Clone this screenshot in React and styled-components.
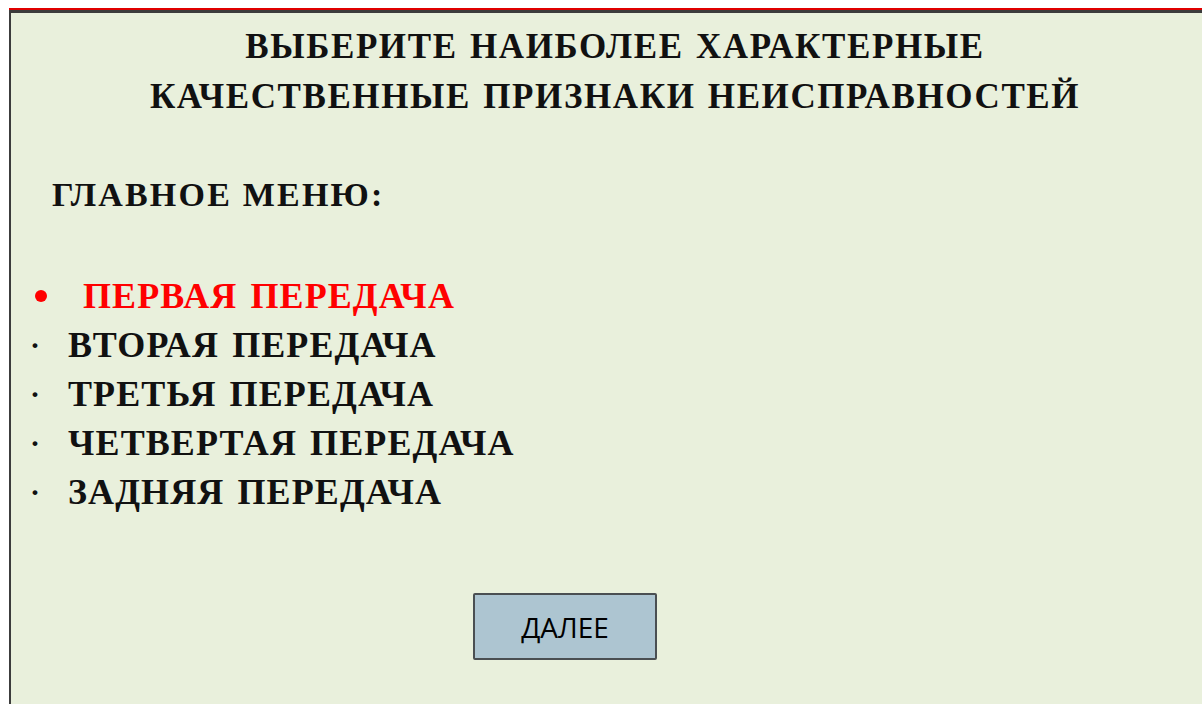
import styled, { createGlobalStyle } from "styled-components";

const GlobalStyle = createGlobalStyle`
  html, body {
    margin: 0;
    padding: 0;
    background: #ffffff;
    overflow: hidden;
  }
`;

const gears = [
  { id: 1, label: "ПЕРВАЯ ПЕРЕДАЧА", active: true },
  { id: 2, label: "ВТОРАЯ ПЕРЕДАЧА" },
  { id: 3, label: "ТРЕТЬЯ ПЕРЕДАЧА" },
  { id: 4, label: "ЧЕТВЕРТАЯ ПЕРЕДАЧА" },
  { id: 5, label: "ЗАДНЯЯ ПЕРЕДАЧА" },
];

const App = () => {
  return (
    <>
      <GlobalStyle />
      <Slide>
        <Title>
          <span>ВЫБЕРИТЕ НАИБОЛЕЕ ХАРАКТЕРНЫЕ</span>
          <span>КАЧЕСТВЕННЫЕ ПРИЗНАКИ НЕИСПРАВНОСТЕЙ</span>
        </Title>

        <MenuHeading>ГЛАВНОЕ МЕНЮ:</MenuHeading>

        <GearList>
          {gears.map((gear) => (
            <GearItem key={gear.id} $active={gear.active}>
              <Marker $active={gear.active}>
                {gear.active ? <Dot /> : "·"}
              </Marker>
              {gear.label}
            </GearItem>
          ))}
        </GearList>

        <NextButton type="button">ДАЛЕЕ</NextButton>
      </Slide>
    </>
  );
};

export default App;

const Slide = styled.section`
  margin: 10px 0 0 9px;
  width: 1210px;
  height: 720px;
  box-sizing: border-box;
  background: #e9f0dc;
  border-left: 2px solid #3c3c3c;
  border-top: 3px solid #3c3c3c;
  box-shadow: 0 -2px 0 #e00000;
  padding: 9px 0 0 0;
  display: flex;
  flex-direction: column;
  font-family: "Liberation Serif", "Times New Roman", serif;
  color: #111;
`;

const Title = styled.h1`
  margin: 0;
  display: flex;
  flex-direction: column;
  align-items: center;
  font-size: 35px;
  font-weight: 700;
  line-height: 50px;
  letter-spacing: 1.6px;
  word-spacing: 2px;
`;

const MenuHeading = styled.h2`
  margin: 48px 0 0 41px;
  font-size: 34px;
  font-weight: 700;
  line-height: 50px;
  letter-spacing: 2.2px;
`;

const GearList = styled.ul`
  list-style: none;
  margin: 51px 0 0 0;
  padding: 0;
  display: flex;
  flex-direction: column;
`;

const GearItem = styled.li`
  display: flex;
  align-items: center;
  height: 49px;
  font-size: 36px;
  font-weight: 700;
  letter-spacing: 1.1px;
  word-spacing: 3px;
  white-space: pre;
  color: ${(p) => (p.$active ? "#ff0000" : "#111")};
`;

const Marker = styled.span`
  display: flex;
  align-items: center;
  width: ${(p) => (p.$active ? "72px" : "57px")};
  padding-left: ${(p) => (p.$active ? "24px" : "19px")};
  box-sizing: border-box;
  font-size: 30px;
  color: #111;
`;

const Dot = styled.span`
  width: 12px;
  height: 12px;
  border-radius: 50%;
  background: #ff0000;
`;

const NextButton = styled.button`
  margin: 77px 0 0 462px;
  width: 184px;
  height: 67px;
  background: #adc5d1;
  border: 2px solid #4a4f52;
  border-radius: 2px;
  font-family: "Open Sans", "Liberation Sans", sans-serif;
  font-size: 28px;
  color: #000;
  padding: 0;
`;
